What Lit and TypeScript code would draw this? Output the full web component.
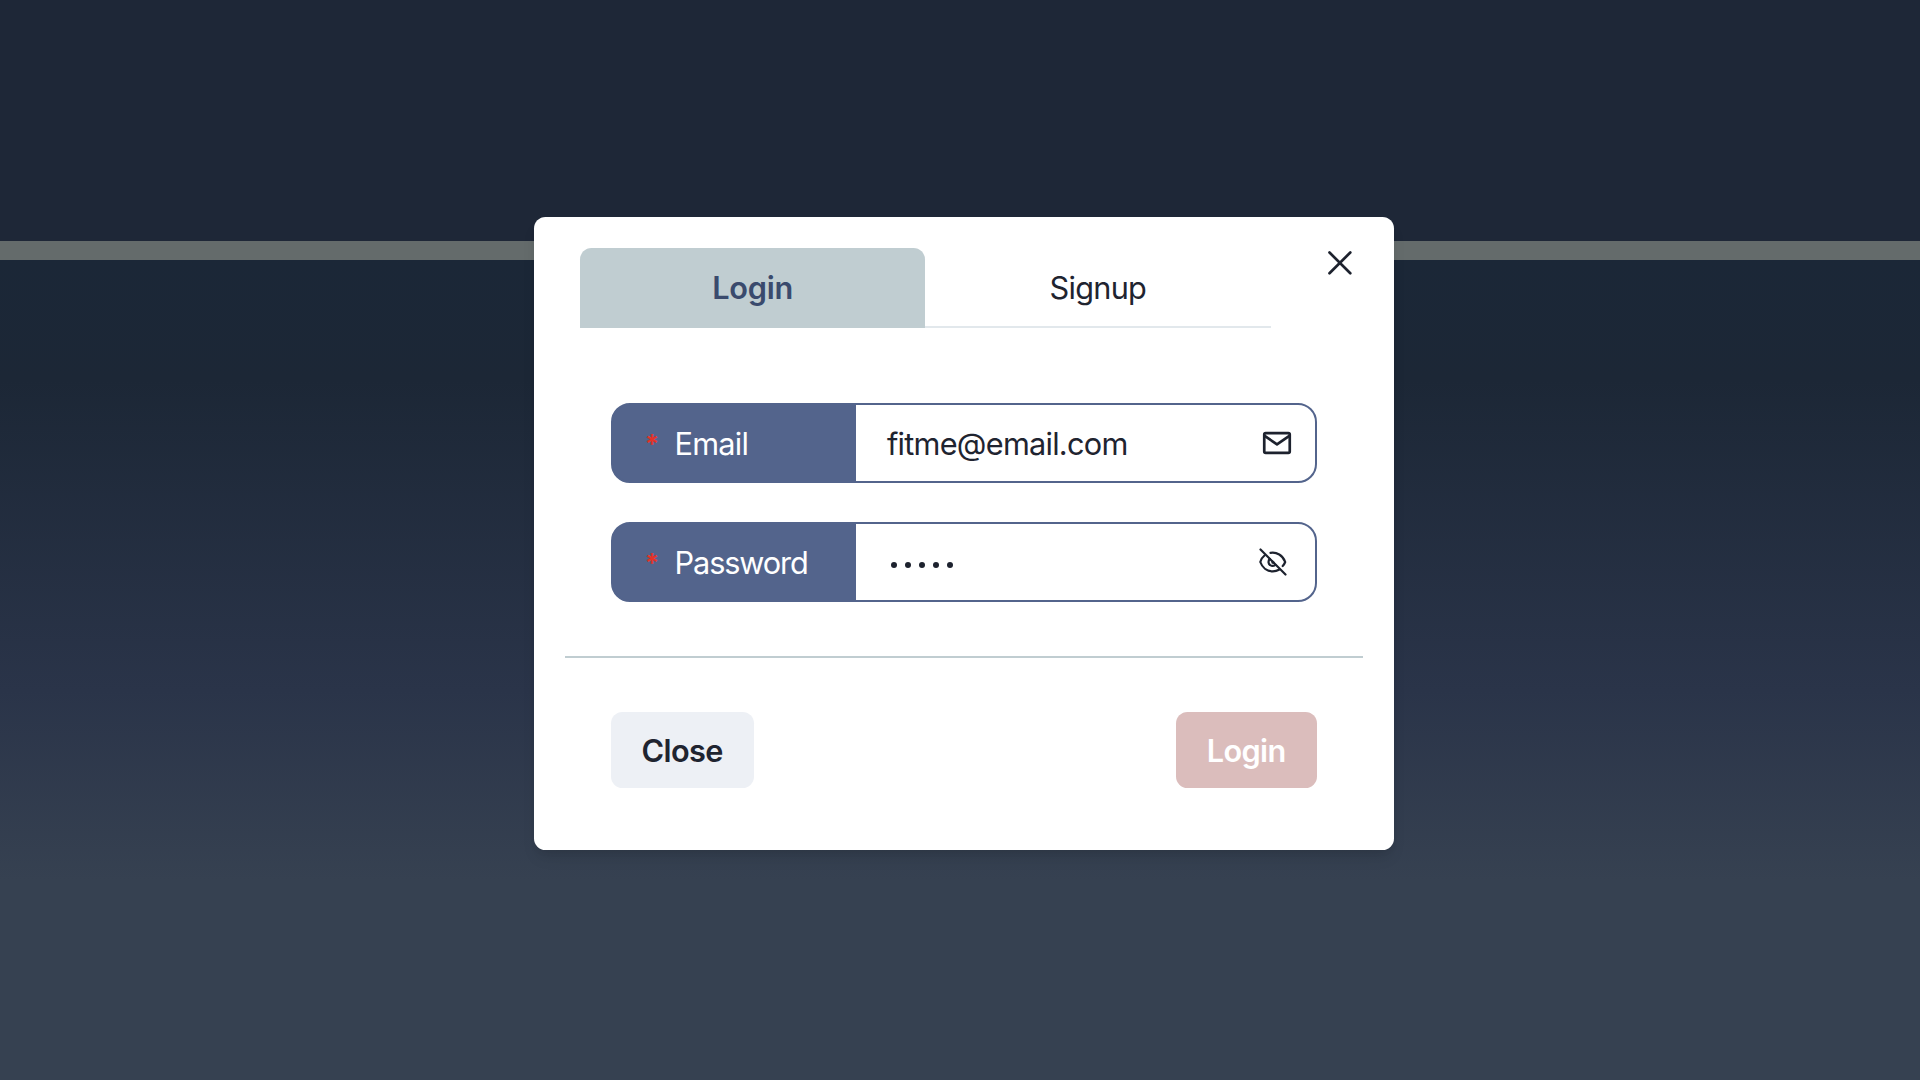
import { LitElement, html, css } from "lit";
import { customElement } from "lit/decorators.js";

@customElement("app-root")
export class AppRoot extends LitElement {
  static styles = css`
    :host {
      display: block;
    }
    .page {
      box-sizing: border-box;
      width: 1920px;
      height: 1080px;
      overflow: hidden;
      padding: 216.5px 526.3px 0 534px;
      font-family: Inter, "Liberation Sans", sans-serif;
      font-size: 30.7px;
      line-height: 46px;
      letter-spacing: -0.75px;
      color: #1f2430;
      background: linear-gradient(
        to bottom,
        #1e2737 0,
        #1e2737 240.5px,
        #646b6b 241px,
        #646b6b 260px,
        #1b2737 260px,
        #1c2736 380px,
        #2a3449 690px,
        #364151 880px,
        #364151 100%
      );
    }
    .dialog {
      position: relative;
      box-sizing: border-box;
      height: 633.3px;
      border-radius: 11.5px;
      background: #fff;
      box-shadow: 0 10px 15px -3px rgba(0, 0, 0, 0.1), 0 4px 6px -2px rgba(0, 0, 0, 0.05);
      padding: 31px 31px 0;
      display: flex;
      flex-direction: column;
    }
    .tabs {
      display: flex;
      width: 690.5px;
      height: 80.3px;
      margin-left: 15px;
    }
    .tab {
      flex: 1;
      box-sizing: border-box;
      display: flex;
      align-items: center;
      justify-content: center;
      padding-top: 3.5px;
      border-bottom: 2px solid #e2e8ec;
    }
    .tab.active {
      background: #c0cdd1;
      border-color: #c0cdd1;
      border-radius: 11.5px 11.5px 0 0;
      color: #3a4a6d;
      font-weight: 600;
      letter-spacing: -0.25px;
    }
    .close-icon {
      position: absolute;
      left: 794px;
      top: 34px;
      width: 24px;
      height: 24px;
    }
    .fields {
      display: flex;
      flex-direction: column;
      gap: 39px;
      padding: 75px 46px 0;
    }
    .field {
      box-sizing: border-box;
      display: flex;
      height: 80px;
      border: 2px solid #53648c;
      border-radius: 19px;
      background: linear-gradient(to right, #53648c 245px, #fff 245px) border-box;
    }
    .label {
      box-sizing: border-box;
      width: 243px;
      flex: none;
      display: flex;
      align-items: center;
      color: #fff;
      padding: 2px 0 0 32px;
    }
    .password .label {
      letter-spacing: -1.1px;
    }
    .star {
      width: 29.5px;
      color: #e53327;
      font-size: 26px;
      font-weight: 600;
    }
    .value {
      flex: 1;
      display: flex;
      align-items: center;
      padding: 2px 0 0 31px;
    }
    .icon {
      align-self: center;
      flex: none;
    }
    .mail {
      margin-right: 21px;
    }
    .eye {
      margin-right: 25px;
    }
    .dots {
      display: flex;
      gap: 7.9px;
      padding: 4px 0 0 4.4px;
    }
    .dot {
      width: 6px;
      height: 6px;
      border-radius: 50%;
      background: #1d222e;
    }
    .rule {
      height: 2px;
      margin-top: 54px;
      background: #c0cdd1;
    }
    .actions {
      display: flex;
      justify-content: space-between;
      padding: 54px 46px 0;
    }
    .button {
      box-sizing: border-box;
      width: 142.5px;
      height: 76.5px;
      padding-top: 2px;
      border-radius: 11.5px;
      display: flex;
      align-items: center;
      justify-content: center;
      font-weight: 600;
      letter-spacing: -0.6px;
      background: #edf0f5;
    }
    .button.primary {
      width: 141px;
      background: #dbbdbc;
      color: #fff;
    }
  `;

  render() {
    return html`
      <div class="page">
        <div class="dialog">
          <div class="tabs">
            <div class="tab active">Login</div>
            <div class="tab">Signup</div>
          </div>
          <svg class="close-icon" viewBox="0 0 24 24" fill="none" stroke="#1d222e" stroke-width="2.7" stroke-linecap="round">
            <path d="M1.5 1.500 22.300 22.300M22.300 1.500 1.500 22.300" />
          </svg>
          <div class="fields">
            <div class="field">
              <div class="label"><span class="star">*</span><span>Email</span></div>
              <div class="value">fitme@email.com</div>
              <svg class="icon mail" width="34" height="34" viewBox="0 0 24 24" fill="none" stroke="#1d222e" stroke-width="1.9" stroke-linejoin="round" stroke-linecap="round">
                <rect x="3" y="5" width="18" height="14" rx="1" />
                <path d="m3.300 7 8.700 6 8.700-6" />
              </svg>
            </div>
            <div class="field password">
              <div class="label"><span class="star">*</span><span>Password</span></div>
              <div class="value">
                <div class="dots">${[0, 1, 2, 3, 4].map(() => html`<span class="dot"></span>`)}</div>
              </div>
              <svg class="icon eye" width="34" height="34" viewBox="0 0 34 34" fill="none" stroke="#1d222e" stroke-width="2.2" stroke-linejoin="round" stroke-linecap="round">
                <path d="M4.500 4.500 29.500 29.500" />
                <path d="M8.500 10.500C6.200 12.300 4.800 15 4.300 17c2 5.800 7 9.300 12.500 9.300 2.300 0 4.500-.6 6.200-1.600" />
                <path d="M14.500 7.800c6-1.100 12.500 2.500 14.700 9.200-.6 1.600-1.500 3-2.500 4" />
                <path d="M13.800 13.800c-2 2.300-1.400 5 .2 6.200 1.600 1.300 3.700 1.100 5.400-.2" />
                <path d="M16.500 16.500v1.200h1.200" />
              </svg>
            </div>
          </div>
          <div class="rule"></div>
          <div class="actions">
            <div class="button">Close</div>
            <div class="button primary">Login</div>
          </div>
        </div>
      </div>
    `;
  }
}
